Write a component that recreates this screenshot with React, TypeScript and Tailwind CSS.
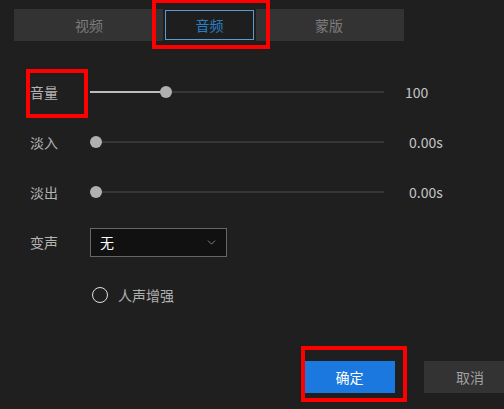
import { ChevronDown } from "lucide-react"

const font = { fontFamily: '"Noto Sans CJK SC", "Noto Sans", sans-serif' }

function SliderRow({ label, value, pos, valueGap }: { label: string; value: string; pos: number; valueGap: string }) {
  return (
    <div className="flex h-[50px] items-center">
      <div className="w-[90px] pl-[30px] text-[14px] text-[#b4b4b4]">{label}</div>
      <div className="relative h-[12px] w-[294px]">
        <div className="absolute left-0 right-0 top-[5px] h-[2px] bg-[#363636]" />
        <div className="absolute left-0 top-[5px] h-[2px] bg-[#bdbdbd]" style={{ width: pos }} />
        <div className="absolute top-0 h-[12px] w-[12px] rounded-full bg-[#b0b0b0]" style={{ left: Math.max(pos - 6, 0) }} />
      </div>
      <div className={`${valueGap} text-[14px] text-[#c4c4c4]`}>{value}</div>
    </div>
  )
}

export default function App() {
  return (
    <div className="relative h-[409px] w-[504px] overflow-hidden bg-[#1f1f1f]" style={font}>
      {/* Tabs */}
      <div className="ml-[14px] mt-[9px] flex h-[32px] w-[390px] bg-[#333333] px-[15px] text-[14px]">
        <div className="flex w-[120px] items-center justify-center text-[#7c7c7c]">视频</div>
        <div className="w-[120px] pl-[14px]">
          <div className="h-full w-[93px] bg-[#1e1e1e] px-[2px] py-[1px]">
            <div className="flex h-full items-center justify-center border border-[#5c9bd3] text-[#2a7fc4]">音频</div>
          </div>
        </div>
        <div className="flex w-[120px] items-center justify-center text-[#7c7c7c]">蒙版</div>
      </div>

      <div className="mt-[26px]">
        <SliderRow label="音量" value="100" pos={76} valueGap="ml-[21px]" />
        <SliderRow label="淡入" value="0.00s" pos={0} valueGap="ml-[25px]" />
        <SliderRow label="淡出" value="0.00s" pos={0} valueGap="ml-[25px]" />

        <div className="flex h-[50px] items-center">
          <div className="w-[90px] pl-[30px] text-[14px] text-[#b4b4b4]">变声</div>
          <div className="flex h-[29px] w-[137px] items-center justify-between border border-[#666] bg-[#111111] pl-[9px] pr-[8px]">
            <span className="text-[14px] text-white">无</span>
            <ChevronDown size={13} strokeWidth={1.5} className="text-[#9a9a9a]" />
          </div>
        </div>

        <div className="mt-[3px] flex h-[50px] items-center pl-[92px]">
          <div className="h-[16px] w-[16px] rounded-full border-[1.5px] border-[#e0e0e0]" />
          <span className="ml-[10px] text-[14px] text-[#b0b0b0]">人声增强</span>
        </div>
      </div>

      {/* Footer */}
      <div className="mt-[41px] flex pl-[304px]">
        <button className="flex h-[32px] w-[91px] shrink-0 items-center justify-center bg-[#1a78de] text-[14px] text-white">确定</button>
        <button className="ml-[29px] flex h-[32px] w-[92px] shrink-0 items-center justify-center bg-[#333333] text-[14px] text-[#a0a0a0]">取消</button>
      </div>

      {/* Annotation boxes */}
      <div className="absolute left-[152px] top-[-1px] h-[50px] w-[118px] border-4 border-[#ff0000]" />
      <div className="absolute left-[26px] top-[69px] h-[49px] w-[62px] border-4 border-[#ff0000]" />
      <div className="absolute left-[301px] top-[346px] h-[56px] w-[106px] border-4 border-[#ff0000]" />
    </div>
  )
}
